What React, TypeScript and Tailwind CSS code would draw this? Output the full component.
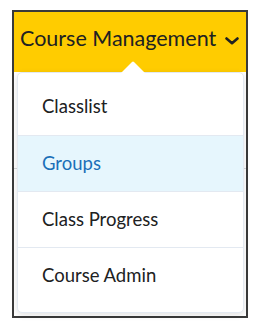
import React from 'react';

interface MenuItem {
  label: string;
  active?: boolean;
}

const items: MenuItem[] = [
  { label: 'Classlist' },
  { label: 'Groups', active: true },
  { label: 'Class Progress' },
  { label: 'Course Admin' },
];

const App: React.FC = () => {
  return (
    <div className="w-[256px] h-[330px] bg-white pt-[10px] pl-[12px]" style={{ fontFamily: 'Lato, "Noto Sans", sans-serif' }}>
      <div className="relative w-[236px] h-[308px] border-2 border-[#3a3a3a] bg-white">
        {/* header bar */}
        <div className="h-[60px] bg-[#ffcc00] flex items-center pl-[6px] pb-[6px]">
          <span className="text-[21.5px] text-[#202122] leading-none">Course Management</span>
          <svg className="ml-[9px] mt-[3px]" width="14" height="8" viewBox="0 0 14 8">
            <path d="M1.5 1.5 L7 6.2 L12.5 1.5" fill="none" stroke="#202122" strokeWidth="2.6" strokeLinecap="round" strokeLinejoin="round" />
          </svg>
        </div>
        <div className="h-[97px] border-b border-[#d6d9dc]" />

        {/* dropdown */}
        <div className="absolute left-[3px] top-[60px] w-[227px] h-[241px] bg-white border border-[#e3e9f1] rounded-[5px] shadow-[0_2px_6px_rgba(0,0,0,0.12)] py-[6px]">
          <svg className="absolute left-[102px] -top-[12px]" width="26" height="13" viewBox="0 0 26 13">
            <path d="M0 13 L12 1 Q13 0 14 1 L26 13 Z" fill="#ffffff" />
          </svg>
          {items.map((item, i) => (
            <div
              key={item.label}
              className={`h-[56px] flex items-center pl-[24px] text-[18.5px] ${i > 0 ? 'border-t border-[#e3e9f1]' : ''} ${item.active ? 'bg-[#e6f6fd] text-[#1a6fb8]' : 'text-[#202122]'}`}
            >
              {item.label}
            </div>
          ))}
        </div>
      </div>
    </div>
  );
};

export default App;
